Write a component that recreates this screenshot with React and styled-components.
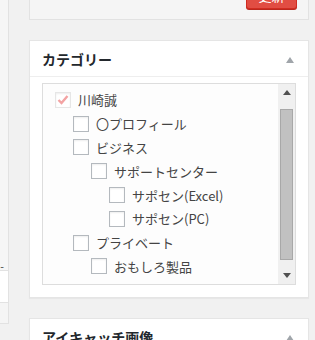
import styled, { createGlobalStyle } from "styled-components";

const GlobalStyle = createGlobalStyle`
  html, body {
    margin: 0;
    padding: 0;
    background: #f1f1f1;
    overflow: hidden;
  }
  body {
    font-family: "Noto Sans CJK JP", "Noto Sans", sans-serif;
    color: #32373c;
  }
`;

const categories = [
  { name: "川崎誠", level: 0, checked: true },
  { name: "〇プロフィール", level: 1 },
  { name: "ビジネス", level: 1 },
  { name: "サポートセンター", level: 2 },
  { name: "サポセン(Excel)", level: 3 },
  { name: "サポセン(PC)", level: 3 },
  { name: "プライベート", level: 1 },
  { name: "おもしろ製品", level: 2 },
];

const App = () => {
  return (
    <Page>
      <GlobalStyle />
      <SideColumn>
        <SideTop>
          <SideDash>-</SideDash>
        </SideTop>
        <SideWhite />
        <SideFoot />
      </SideColumn>
      <MainColumn>
        <PublishFoot>
          <PublishButton>更新</PublishButton>
        </PublishFoot>

        <Postbox>
          <BoxHeader>
            <BoxTitle>カテゴリー</BoxTitle>
            <Toggle />
          </BoxHeader>
          <BoxInside>
            <Checklist>
              <List>
                {categories.map((c) => (
                  <Item key={c.name} $level={c.level}>
                    <Check $checked={c.checked}>
                      {c.checked && (
                        <svg width="12" height="11" viewBox="0 0 12 11">
                          <path
                            d="M1.5 6 L4.5 9 L10.5 2"
                            fill="none"
                            stroke="#f3a3a3"
                            strokeWidth="2.4"
                          />
                        </svg>
                      )}
                    </Check>
                    <Label>{c.name}</Label>
                  </Item>
                ))}
              </List>
              <Scrollbar>
                <ScrollArrow>
                  <svg width="8" height="5" viewBox="0 0 8 5">
                    <path d="M0 5 L4 0 L8 5 Z" fill="#505050" />
                  </svg>
                </ScrollArrow>
                <Track>
                  <Thumb />
                </Track>
                <ScrollArrow>
                  <svg width="8" height="5" viewBox="0 0 8 5">
                    <path d="M0 0 L8 0 L4 5 Z" fill="#505050" />
                  </svg>
                </ScrollArrow>
              </Scrollbar>
            </Checklist>
          </BoxInside>
        </Postbox>

        <Postbox>
          <BoxHeader>
            <BoxTitle>アイキャッチ画像</BoxTitle>
            <Toggle />
          </BoxHeader>
        </Postbox>
      </MainColumn>
    </Page>
  );
};

const Page = styled.div`
  display: flex;
  align-items: flex-start;
  gap: 20px;
  width: 315px;
  height: 340px;
  overflow: hidden;
`;

const SideColumn = styled.div`
  width: 8px;
  flex-shrink: 0;
  display: flex;
  flex-direction: column;
  border-right: 1px solid #e2e2e2;
  border-bottom: 1px solid #e2e2e2;
`;

const SideTop = styled.div`
  height: 270px;
  background: #f6f6f6;
  border-bottom: 1px solid #e2e2e2;
  position: relative;
  z-index: 1;
`;

const SideDash = styled.span`
  position: absolute;
  right: 4px;
  bottom: -2px;
  font-family: "Liberation Sans", sans-serif;
  font-size: 11px;
  line-height: 1;
  color: #555;
`;

const SideWhite = styled.div`
  height: 31px;
  background: #fff;
  border-bottom: 1px solid #e2e2e2;
`;

const SideFoot = styled.div`
  height: 20px;
  background: #f5f5f5;
`;

const MainColumn = styled.div`
  width: 280px;
  flex-shrink: 0;
  display: flex;
  flex-direction: column;
  gap: 20px;
`;

const PublishFoot = styled.div`
  height: 20px;
  box-sizing: border-box;
  background: #f5f5f5;
  border: 1px solid #e2e2e2;
  border-top: none;
  display: flex;
  justify-content: flex-end;
  align-items: flex-end;
  padding: 0 11px 10px 0;
`;

const PublishButton = styled.button`
  width: 51px;
  height: 28px;
  margin-top: -18px;
  flex-shrink: 0;
  background: #e14d43;
  border: 1px solid #d02c21;
  border-radius: 3px;
  box-shadow: 0 1px 0 #ba281e;
  color: #fff;
  font-family: inherit;
  font-size: 13px;
  padding: 0;
`;

const Postbox = styled.div`
  background: #fff;
  border: 1px solid #e5e5e5;
  box-shadow: 0 1px 1px rgba(0, 0, 0, 0.04);
`;

const BoxHeader = styled.div`
  height: 35px;
  border-bottom: 1px solid #eee;
  display: flex;
  align-items: center;
  justify-content: space-between;
  padding: 0 14px 0 12px;
`;

const BoxTitle = styled.h2`
  margin: 0;
  font-size: 14px;
  font-weight: 700;
  color: #23282d;
  line-height: 1;
`;

const Toggle = styled.span`
  width: 0;
  height: 0;
  border-left: 4px solid transparent;
  border-right: 4px solid transparent;
  border-bottom: 6px solid #a0a5aa;
  margin-top: 2px;
`;

const BoxInside = styled.div`
  padding: 6px 12px 12px 12px;
`;

const Checklist = styled.div`
  height: 202px;
  box-sizing: border-box;
  border: 1px solid #dddddd;
  background: #fdfdfd;
  display: flex;
`;

const List = styled.ul`
  flex: 1;
  list-style: none;
  margin: 0;
  padding: 4px 0 0 12px;
`;

const Item = styled.li`
  display: flex;
  align-items: center;
  height: 23.8px;
  padding-left: ${(p) => p.$level * 18}px;
`;

const Check = styled.span`
  width: 16px;
  height: 16px;
  box-sizing: border-box;
  flex-shrink: 0;
  border: 1px solid ${(p) => (p.$checked ? "#e6e6e6" : "#b4b9be")};
  background: #fff;
  box-shadow: inset 0 1px 2px rgba(0, 0, 0, 0.07);
  display: flex;
  align-items: center;
  justify-content: center;
  margin-right: 7px;
`;

const Label = styled.span`
  font-size: 13px;
  color: #444;
  white-space: nowrap;
  line-height: 1;
`;

const Scrollbar = styled.div`
  width: 17px;
  flex-shrink: 0;
  background: #f0f0f0;
  display: flex;
  flex-direction: column;
`;

const ScrollArrow = styled.div`
  height: 17px;
  display: flex;
  align-items: center;
  justify-content: center;
`;

const Track = styled.div`
  flex: 1;
  display: flex;
  flex-direction: column;
  padding: 8px 2px 7px 2px;
`;

const Thumb = styled.div`
  flex: 1;
  background: #c1c1c1;
  border: 1px solid #a8a8a8;
`;

export default App;
